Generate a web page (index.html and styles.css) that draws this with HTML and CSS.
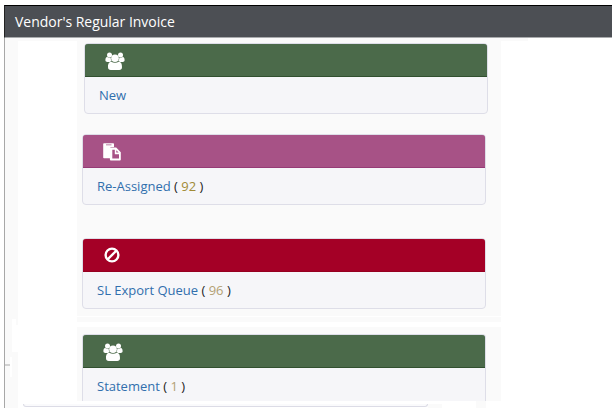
FILE: index.html
```
<!DOCTYPE html>
<html lang="en">
<head>
<meta charset="utf-8">
<title>Vendor's Regular Invoice</title>
<link rel="stylesheet" href="styles.css">
</head>
<body>
<svg class="defs" width="0" height="0" aria-hidden="true">
  <symbol id="users" viewBox="0 0 20 18">
    <circle cx="4.500" cy="2.900" r="2.500"/><circle cx="15.500" cy="2.900" r="2.500"/>
    <path d="M2.200 5C.8 5 .4 6.800.4 8.200c0 1.200.8 1.700 2 1.700h2.600c.6-.6 1-.8 1.800-1-.9-.9-1.200-2-1-3.200-1.500.4-2.700 0-3.600-.7zM17.800 5c1.400 0 1.800 1.800 1.800 3.200 0 1.200-.8 1.700-2 1.700h-2.600c-.6-.6-1-.8-1.800-1 .9-.9 1.200-2 1-3.200 1.500.4 2.700 0 3.600-.7z"/>
    <circle cx="10" cy="6.300" r="3.800"/>
    <path d="M6.200 9.700C3.900 9.700 3 12 3 15.200 3 17 4.100 18 5.700 18h8.600c1.600 0 2.700-1 2.700-2.800 0-3.200-.9-5.500-3.200-5.500-2.300 1.500-5.300 1.500-7.600 0z"/>
  </symbol>
  <symbol id="paste" viewBox="0 0 18 18">
    <path fill-rule="evenodd" d="M1 .3h9.200q.8 0 .8.800V4H8.400Q7 4 7 5.500v9.700H1q-.8 0-.8-.8V1.100Q.2.300 1 .3zM3 1.500v.8h5.500v-.8z"/>
    <path fill-rule="evenodd" d="M7.800 4.600h5.400L17.800 9.300v7.200q0 .9-.9.900H7.800q-.9 0-.9-.9v-11q0-.9.900-.9zM9.300 6.700v8.800h6.700v-4.300h-4.200V6.700zM13.300 7.200v2.400h2.300z"/>
  </symbol>
  <symbol id="ban" viewBox="0 0 16 16">
    <circle cx="8" cy="8" r="6.400" fill="none" stroke="#fff" stroke-width="2.400"/>
    <path d="M3.500 12.500l9-9" stroke="#fff" stroke-width="2.400"/>
  </symbol>
</svg>
<header class="titlebar"><h1>Vendor's Regular Invoice</h1></header>
<main class="page">
  <div class="top-strip"></div>
  <div class="columns">
    <aside class="rail">
      <div class="rail-gap"><i></i></div>
      <div class="rail-tick"><i></i><b></b></div>
    </aside>
    <div class="content">
      <section class="panel">
        <article class="card green wide">
          <div class="card-head"><svg class="users"><use href="#users"/></svg></div>
          <div class="card-body"><a>New</a></div>
        </article>
        <article class="card purple">
          <div class="card-head"><svg class="paste"><use href="#paste"/></svg></div>
          <div class="card-body"><a>Re-Assigned</a> ( <span>92</span> )</div>
        </article>
        <article class="card red">
          <div class="card-head"><svg class="ban"><use href="#ban"/></svg></div>
          <div class="card-body"><a>SL Export Queue</a> ( <span class="soft">96</span> )</div>
        </article>
      </section>
      <div class="divider"></div>
      <section class="panel last">
        <article class="card green open">
          <div class="card-head"><svg class="users"><use href="#users"/></svg></div>
          <div class="card-body"><a>Statement</a> ( <span class="soft">1</span> )</div>
        </article>
      </section>
      <footer class="next"><div class="next-card"></div><div class="next-side"></div><div class="next-end"></div></footer>
    </div>
  </div>
</main>
</body>
</html>
```

FILE: styles.css
```
* { box-sizing: border-box; }
body {
  margin: 0; width: 612px; height: 408px; overflow: hidden;
  background: #fff; color: #222;
  font: 13px/18px "Open Sans", sans-serif;
  display: flex; flex-direction: column;
}
.defs { position: absolute; }
.titlebar {
  flex: none; height: 33px; margin: 5px 0 0 4px; padding-left: 10px;
  display: flex; align-items: center;
  background: #4c4f54; border-top: 1px solid #000; border-bottom: 1px solid #a9abad;
  border-left: 1px solid #222;
}
h1 { margin: 0; color: #fff; font-size: 14px; font-weight: 400; line-height: 20px; letter-spacing: -0.02px; }
.page { flex: none; height: 370px; margin-left: 4px; border-left: 1px solid #a8a8a8; }
.top-strip { height: 3px; width: 523px; background: #fafafa; }
.columns { display: flex; height: 367px; }
.rail { width: 13px; background: #fafafa; padding-top: 278px; }
.rail-gap { height: 33px; margin-left: 7px; background: #fff; }
.rail-gap i { display: block; width: 2px; height: 6px; margin-left: 4px; background: #fafafa; }
.rail-tick { height: 20px; margin-top: 5px; display: flex; }
.rail-tick i { width: 5px; height: 2px; margin-top: 7px; background: #d2d2d2; }
.rail-tick b { width: 2px; background: #fff; }
.content { flex: 1; }
.panel { width: 424px; height: 275px; margin-left: 59px; padding: 2px 0 0 5px; background: #fafafa; }
.card {
  width: 404px; height: 71px; overflow: hidden;
  background: #f6f6f9; border: 1px solid #dedee8; border-radius: 4px;
}
.card.wide { margin-left: 2px; margin-bottom: 20px; }
.card.purple { margin-bottom: 33px; }
.card-head {
  height: 34px; margin: -1px -1px 0; display: flex; align-items: center; padding-left: 21px;
  border: 1px solid; border-radius: 4px 4px 0 0;
}
.green .card-head { background: #4b6a4a; border-color: #31502f; }
.purple .card-head { background: #a75286; border-color: #963b76; }
.red .card-head { background: #a40026; border-color: #960020; }
.card-head svg { fill: #fff; }
.users { width: 20px; height: 18px; margin: 1px 0 0 -1px; }
.paste { width: 18px; height: 18px; margin: 1px 0 0 -1px; }
.ban { width: 16px; height: 16px; }
.card-body { padding: 9px 0 0 14px; white-space: pre; }
.card-body a { color: #316fad; }
.card-body span { color: #a18a35; }
.card-body .soft { color: #b3a174; }
.divider { width: 424px; height: 5px; margin: 1px 0 5px 59px; background: #fafafa; }
.panel.last { height: 74px; padding-top: 7px; }
.card.open { height: 67px; border-bottom: 0; border-radius: 4px 4px 0 0; }
.next { display: flex; height: 7px; }
.next-card { width: 405px; height: 3px; margin: 3px 0 0 5px; background: #fafafc; border: 1px solid #dcdce6; border-top: 0; border-radius: 0 0 3px 3px; }
.next-side { width: 14px; height: 4px; margin-top: 3px; background: #fafafa; }
.next-end { width: 10px; margin-left: 34px; background: #fafafa; }
```
